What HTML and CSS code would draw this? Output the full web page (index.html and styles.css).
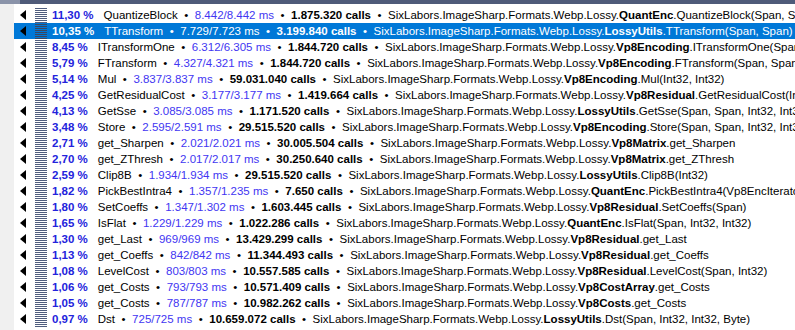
FILE: index.html
```html
<!DOCTYPE html>
<html lang="en">
<head>
    <meta charset="UTF-8">
    <title>Hot Spots</title>
    <link rel="stylesheet" href="styles.css">
</head>
<body>
    <div class="window">
        <div class="topbar">
            <div class="topbar-left"></div>
            <div class="topbar-right"></div>
        </div>
        <div class="main">
            <div class="gutter"></div>
            <div class="tree" id="tree"></div>
        </div>
    </div>

    <script>
        const ns = 'SixLabors.ImageSharp.Formats.Webp.Lossy.';
        const rows = [
            ['11,30 %', 'QuantizeBlock', '8.442/8.442 ms', '1.875.320 calls', 'QuantEnc', 'QuantizeBlock(Span, Span, Vp8Matrix)'],
            ['10,35 %', 'TTransform', '7.729/7.723 ms', '3.199.840 calls', 'LossyUtils', 'TTransform(Span, Span)', true],
            ['8,45 %', 'ITransformOne', '6.312/6.305 ms', '1.844.720 calls', 'Vp8Encoding', 'ITransformOne(Span, Span, Span, Span)'],
            ['5,79 %', 'FTransform', '4.327/4.321 ms', '1.844.720 calls', 'Vp8Encoding', 'FTransform(Span, Span, Span, Span)'],
            ['5,14 %', 'Mul', '3.837/3.837 ms', '59.031.040 calls', 'Vp8Encoding', 'Mul(Int32, Int32)'],
            ['4,25 %', 'GetResidualCost', '3.177/3.177 ms', '1.419.664 calls', 'Vp8Residual', 'GetResidualCost(Int32)'],
            ['4,13 %', 'GetSse', '3.085/3.085 ms', '1.171.520 calls', 'LossyUtils', 'GetSse(Span, Span, Int32, Int32)'],
            ['3,48 %', 'Store', '2.595/2.591 ms', '29.515.520 calls', 'Vp8Encoding', 'Store(Span, Span, Int32, Int32)'],
            ['2,71 %', 'get_Sharpen', '2.021/2.021 ms', '30.005.504 calls', 'Vp8Matrix', 'get_Sharpen'],
            ['2,70 %', 'get_ZThresh', '2.017/2.017 ms', '30.250.640 calls', 'Vp8Matrix', 'get_ZThresh'],
            ['2,59 %', 'Clip8B', '1.934/1.934 ms', '29.515.520 calls', 'LossyUtils', 'Clip8B(Int32)'],
            ['1,82 %', 'PickBestIntra4', '1.357/1.235 ms', '7.650 calls', 'QuantEnc', 'PickBestIntra4(Vp8EncIterator, Vp8ModeScore)'],
            ['1,80 %', 'SetCoeffs', '1.347/1.302 ms', '1.603.445 calls', 'Vp8Residual', 'SetCoeffs(Span)'],
            ['1,65 %', 'IsFlat', '1.229/1.229 ms', '1.022.286 calls', 'QuantEnc', 'IsFlat(Span, Int32, Int32)'],
            ['1,30 %', 'get_Last', '969/969 ms', '13.429.299 calls', 'Vp8Residual', 'get_Last'],
            ['1,13 %', 'get_Coeffs', '842/842 ms', '11.344.493 calls', 'Vp8Residual', 'get_Coeffs'],
            ['1,08 %', 'LevelCost', '803/803 ms', '10.557.585 calls', 'Vp8Residual', 'LevelCost(Span, Int32)'],
            ['1,06 %', 'get_Costs', '793/793 ms', '10.571.409 calls', 'Vp8CostArray', 'get_Costs'],
            ['1,05 %', 'get_Costs', '787/787 ms', '10.982.262 calls', 'Vp8Costs', 'get_Costs'],
            ['0,97 %', 'Dst', '725/725 ms', '10.659.072 calls', 'LossyUtils', 'Dst(Span, Int32, Int32, Byte)']
        ];

        // stacked-lines hotspot icon
        let lines = '';
        for (let y = 1.5; y < 16; y += 2) {
            lines += '<line x1="0" y1="' + y + '" x2="12" y2="' + y + '"/>';
        }
        const icon = '<svg class="icon" width="12" height="16" viewBox="0 0 12 16">' + lines + '</svg>';
        const arrow = '<svg class="arrow" width="6" height="10" viewBox="0 0 6 10"><path d="M6 0 L0 5 L6 10 Z"/></svg>';

        const tree = document.getElementById('tree');
        rows.forEach(r => {
            const row = document.createElement('div');
            row.className = 'row' + (r[6] ? ' selected' : '');
            row.innerHTML = arrow + icon +
                '<span class="pct">' + r[0] + '</span>' +
                '<span class="name">' + r[1] + '</span>' +
                '<span class="sep">•</span>' +
                '<span class="ms">' + r[2] + '</span>' +
                '<span class="sep">•</span>' +
                '<span class="calls">' + r[3] + '</span>' +
                '<span class="sep">•</span>' +
                '<span class="fqn">' + ns + '<b>' + r[4] + '</b>.' + r[5] + '</span>';
            tree.appendChild(row);
        });
    </script>
</body>
</html>
```

FILE: styles.css
```css
* {
    margin: 0;
    padding: 0;
    box-sizing: border-box;
}

body {
    background: #ffffff;
    font-family: 'Liberation Sans', Arial, sans-serif;
    font-size: 11.5px;
    color: #000;
    overflow: hidden;
}

.window {
    width: 795px;
    height: 330px;
    display: flex;
    flex-direction: column;
    overflow: hidden;
}

.topbar {
    display: flex;
    height: 4px;
    flex-shrink: 0;
}

.topbar-left {
    width: 20px;
    background-color: #8a93a9;
}

.topbar-right {
    flex: 1;
    background-color: #4f5b79;
}

.main {
    flex: 1;
    display: flex;
    min-height: 0;
}

.gutter {
    width: 14px;
    background-color: #f0f0f0;
    flex-shrink: 0;
}

.tree {
    flex: 1;
    padding-top: 3px;
    overflow: hidden;
}

.row {
    height: 16px;
    display: flex;
    align-items: center;
    white-space: nowrap;
    padding-left: 6px;
    line-height: 16px;
}

.row.selected {
    background-color: #0078d7;
    color: #fff;
}

.arrow {
    fill: #000;
    flex-shrink: 0;
}

.icon {
    stroke: #4f5d7e;
    stroke-width: 1;
    margin-left: 9px;
    flex-shrink: 0;
}

.row.selected .icon {
    stroke: #3a4660;
}

.pct {
    font-weight: bold;
    color: #2323dc;
    margin-left: 5px;
    margin-right: 10px;
}

.ms {
    color: #4236f2;
}

.calls {
    font-weight: bold;
}

.sep {
    margin: 0 6.5px;
}

.row.selected .pct,
.row.selected .ms {
    color: #fff;
}

.fqn b {
    font-weight: bold;
}
```
